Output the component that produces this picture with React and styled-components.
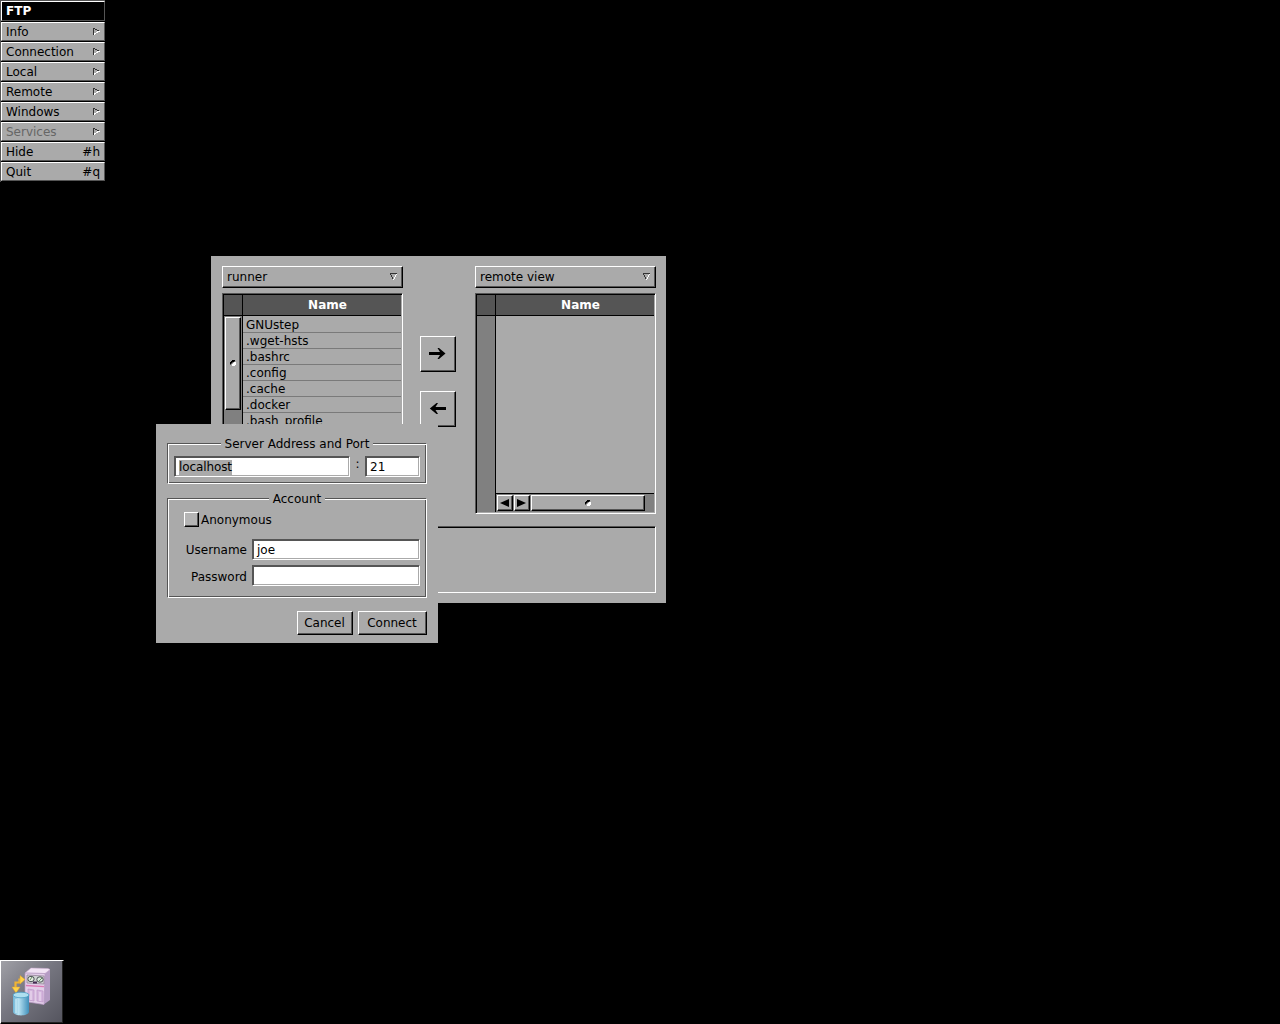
import React from 'react';
import styled, { createGlobalStyle, css } from 'styled-components';

const GRAY = '#aaaaaa';
const DARK = '#555555';
const TROUGH = '#808080';

const Global = createGlobalStyle`
  * { box-sizing: border-box; }
  body {
    margin: 0;
    background: #000;
    color: #000;
    font: 12px/14px "DejaVu Sans", sans-serif;
    overflow: hidden;
  }
  svg { display: block; flex: none; }
`;

const raised = css`
  background: ${GRAY};
  border: 1px solid #000;
  border-top-color: #fff;
  border-left-color: #fff;
  box-shadow: inset -1px -1px 0 ${DARK};
`;

const sunken = css`
  border: 1px solid #fff;
  border-top-color: ${DARK};
  border-left-color: ${DARK};
  box-shadow: inset 1px 1px 0 #000;
`;

const Desktop = styled.main`
  position: relative;
  width: 1280px;
  height: 1024px;
  background: #000;
  overflow: hidden;
`;

/* ---- application menu ---- */

const Menu = styled.nav`
  position: absolute;
  left: 0;
  top: 0;
  width: 105px;
  padding-left: 1px;
  border-top: 1px solid ${DARK};
  background: linear-gradient(${DARK}, ${DARK}) 0 0 / 1px 181px no-repeat;
`;

const MenuTitle = styled.div`
  height: 20px;
  margin-bottom: 1px;
  padding: 3px 4px;
  border: 1px solid ${DARK};
  border-top-color: #fff;
  border-left-color: #fff;
  background: #000;
  color: #fff;
  font-weight: bold;
  line-height: 13px;
`;

const MenuItem = styled.div`
  display: flex;
  justify-content: space-between;
  height: 19px;
  margin-bottom: 1px;
  padding: 2px 4px 0;
  border: 1px solid ${DARK};
  border-top-color: #fff;
  border-left-color: #fff;
  background: ${GRAY};
  color: ${(p) => (p.$disabled ? '#666' : '#000')};
`;

const SubmenuArrow = styled.svg`
  margin-top: 2px;
`;

/* ---- windows ---- */

const Window = styled.section`
  position: absolute;
  left: ${(p) => p.$x}px;
  top: ${(p) => p.$y}px;
  width: ${(p) => p.$w}px;
  height: ${(p) => p.$h}px;
  background: ${GRAY};
`;

const Browser = styled.div`
  display: flex;
  padding: 10px 10px 0 11px;
`;

const Pane = styled.div`
  width: 181px;
`;

const PopUp = styled.div`
  ${raised}
  display: flex;
  justify-content: space-between;
  height: 22px;
  padding: 3px 4px 0;
`;

const PopUpArrow = styled.svg`
  margin-top: 2px;
`;

const Table = styled.div`
  ${sunken}
  display: flex;
  height: 221px;
  margin-top: 5px;
  padding: 1px;
`;

const Side = styled.div`
  display: flex;
  flex-direction: column;
  width: 19px;
  border-right: 1px solid #000;
  background: ${TROUGH};
`;

const Corner = styled.div`
  height: 21px;
  background: ${DARK};
  border-bottom: 1px solid #000;
`;

const Knob = styled.div`
  ${raised}
  display: flex;
  align-items: center;
  justify-content: center;
  width: ${(p) => p.$w}px;
  height: ${(p) => p.$h}px;
  padding-bottom: ${(p) => (p.$h % 2)}px;
`;

const SideTrack = styled.div`
  padding: 1px 0 0 1px;
`;

const Column = styled.div`
  display: flex;
  flex-direction: column;
  flex: 1;
  min-width: 0;
`;

const Heading = styled.div`
  height: 21px;
  padding: 3px 0 0 11px;
  background: ${DARK};
  border-bottom: 1px solid #000;
  color: #fff;
  font-weight: bold;
  text-align: center;
`;

const Rows = styled.div`
  flex: 1;
  min-height: 0;
  padding-top: 1px;
  overflow: hidden;
`;

const Row = styled.div`
  height: 16px;
  padding: 1px 3px 0;
  background: linear-gradient(#7a7a7a, #7a7a7a) 0 100% / 100% 1px no-repeat;
`;

const HScroller = styled.div`
  display: flex;
  gap: 1px;
  height: 19px;
  padding: 1px 0 0 1px;
  border-top: 1px solid #000;
  background: ${TROUGH};
`;

const Transfer = styled.div`
  display: flex;
  flex-direction: column;
  gap: 19px;
  width: 72px;
  padding: 70px 0 0 17px;
`;

const ArrowButton = styled.div`
  ${raised}
  width: 36px;
  height: 36px;
  display: flex;
  align-items: center;
  justify-content: center;
  padding: 0 1px 1px 0;
`;

const Log = styled.div`
  ${sunken}
  height: 67px;
  margin: 12px 10px 0 11px;
`;

/* ---- connection panel ---- */

const Panel = styled(Window)`
  padding: 12px 11px 0;
`;

const Group = styled.fieldset`
  position: relative;
  min-width: 0;
  width: 260px;
  height: ${(p) => p.$h}px;
  margin: 7px 0 ${(p) => p.$gap}px;
  padding: ${(p) => p.$pad};
  border: 1px solid #fff;
  border-top-color: ${DARK};
  border-left-color: ${DARK};
  box-shadow: inset 1px 1px 0 #fff, inset -1px -1px 0 ${DARK};
`;

const GroupTitle = styled.div`
  position: absolute;
  left: 50%;
  top: -7px;
  transform: translateX(-50%);
  width: ${(p) => p.$w}px;
  background: ${GRAY};
  text-align: center;
  white-space: nowrap;
`;

const Line = styled.div`
  display: flex;
  align-items: flex-start;
  margin-bottom: ${(p) => p.$mb || 0}px;
`;

const Field = styled.div`
  width: ${(p) => p.$w}px;
  height: 21px;
  padding: 3px 4px;
  background: #fff;
  border: 1px solid #fff;
  border-top-color: ${DARK};
  border-left-color: ${DARK};
  box-shadow: inset 1px 1px 0 ${DARK}, inset -1px -1px 0 ${GRAY};
`;

const Selection = styled.span`
  display: inline-block;
  width: 53px;
  height: 15px;
  background: ${GRAY};
  letter-spacing: -0.1px;
`;

const Colon = styled.span`
  width: 15px;
  padding-top: 1px;
  text-align: center;
`;

const Label = styled.label`
  width: 79px;
  padding: ${(p) => p.$top}px 5px 0 0;
  text-align: right;
`;

const CheckBox = styled.span`
  ${raised}
  width: 15px;
  height: 15px;
  margin: 0 2px 0 11px;
  background: #b4b4b4;
`;

const CheckLabel = styled.span`
  padding-top: 1px;
`;

const Buttons = styled.div`
  display: flex;
  justify-content: flex-end;
  gap: 5px;
`;

const Button = styled.div`
  ${raised}
  width: ${(p) => p.$w}px;
  height: 24px;
  padding: 4px 1px 0 0;
  text-align: center;
`;

const AppIcon = styled.div`
  position: absolute;
  left: 0;
  bottom: 0;
  width: 64px;
  height: 64px;
  border: 1px solid #000;
  border-top-color: #fff;
  border-left-color: #fff;
  background: linear-gradient(135deg, #a0a0a6, #767680 45%, #54545e);
  box-shadow: inset -1px -1px 0 #222;
`;

const Dimple = () => (
  <svg width="6" height="6" shapeRendering="crispEdges">
    <path d="M4 1h1v1H4zM2 2h1v1H2zM0 4h1v1H0zM1 3h1v1H1z" fill="#555" />
    <path d="M2 0h3v1H2zM1 1h3v1H1zM0 2h2v1H0zM0 3h1v1H0z" fill="#000" />
    <path d="M4 2h2v2H4zM3 3h3v1H3zM2 4h4v1H2zM2 5h3v1H2z" fill="#fff" />
  </svg>
);

const items = [
  ['Info'], ['Connection'], ['Local'], ['Remote'], ['Windows'],
  ['Services', null, true], ['Hide', '#h'], ['Quit', '#q'],
];

const files = ['GNUstep', '.wget-hsts', '.bashrc', '.config', '.cache', '.docker', '.bash_profile'];

const Selector = ({ children }) => (
  <PopUp>
    {children}
    <PopUpArrow width="9" height="9" shapeRendering="crispEdges">
      <path d="M7 2h1v1H7zM6 3h1v2H6zM5 5h1v2H5zM4 7h1v1H4z" fill="#fff" />
      <path d="M1 1h7v1H1zM1 2h1v1H1zM2 3h1v2H2zM3 5h1v2H3z" fill="#333" />
    </PopUpArrow>
  </PopUp>
);

function FileWindow() {
  return (
    <Window $x={211} $y={256} $w={455} $h={347}>
      <Browser>
        <Pane>
          <Selector>runner</Selector>
          <Table>
            <Side>
              <Corner />
              <SideTrack><Knob $w={16} $h={93}><Dimple /></Knob></SideTrack>
            </Side>
            <Column>
              <Heading>Name</Heading>
              <Rows>{files.map((f) => <Row key={f}>{f}</Row>)}</Rows>
            </Column>
          </Table>
        </Pane>
        <Transfer>
          <ArrowButton>
            <svg width="17" height="11">
              <path d="M0 4h11L8.500 0h1.500l6.500 5.500L10 11H8.500L11 7H0z" />
            </svg>
          </ArrowButton>
          <ArrowButton>
            <svg width="17" height="11">
              <path d="M17 4H6.500L9 0H7.500L.8 5.500 7.500 11H9L6.500 7H17z" />
            </svg>
          </ArrowButton>
        </Transfer>
        <Pane>
          <Selector>remote view</Selector>
          <Table>
            <Side><Corner /></Side>
            <Column>
              <Heading>Name</Heading>
              <Rows />
              <HScroller>
                <Knob $w={16} $h={16}><svg width="10" height="8"><path d="M9 0v8L0 4z" /></svg></Knob>
                <Knob $w={16} $h={16}><svg width="10" height="8"><path d="M0 0v8l9-4z" /></svg></Knob>
                <Knob $w={114} $h={16}><Dimple /></Knob>
              </HScroller>
            </Column>
          </Table>
        </Pane>
      </Browser>
      <Log />
    </Window>
  );
}

function ConnectPanel() {
  return (
    <Panel $x={156} $y={424} $w={282} $h={219}>
      <Group $h={41} $gap={14} $pad="12px 6px 0">
        <GroupTitle $w={152}>Server Address and Port</GroupTitle>
        <Line>
          <Field $w={176}><Selection>localhost</Selection></Field>
          <Colon>:</Colon>
          <Field $w={55}>21</Field>
        </Line>
      </Group>
      <Group $h={100} $gap={13} $pad="13px 6px 0 5px">
        <GroupTitle $w={56}>Account</GroupTitle>
        <Line $mb={12}>
          <CheckBox />
          <CheckLabel>Anonymous</CheckLabel>
        </Line>
        <Line $mb={5}><Label $top={4}>Username</Label><Field $w={168}>joe</Field></Line>
        <Line><Label $top={5}>Password</Label><Field $w={168} /></Line>
      </Group>
      <Buttons>
        <Button $w={56}>Cancel</Button>
        <Button $w={69}>Connect</Button>
      </Buttons>
    </Panel>
  );
}

const FtpIcon = () => (
  <svg width="62" height="62" viewBox="0 0 62 62">
    <defs>
      <linearGradient id="can" x1="0" x2="1">
        <stop offset="0" stopColor="#6fb4d6" />
        <stop offset=".35" stopColor="#b9e2f2" />
        <stop offset="1" stopColor="#3f8fba" />
      </linearGradient>
    </defs>
    <path d="M44 12l5-4v31l-7 5z" fill="#b59cc4" />
    <path d="M24 12l6-5 17 .5 2 1-5 4z" fill="#f1e3f4" stroke="#c9a9cf" strokeWidth=".5" />
    <path d="M24 12l20 .5-1 31-19-3z" fill="#e3cfe9" stroke="#b698c2" strokeWidth=".7" />
    <path d="M26 14l17 1v8l-17-1z" fill="#cfd3d2" stroke="#8b7891" strokeWidth=".7" />
    <ellipse cx="30" cy="18" rx="3.2" ry="2.7" fill="#e4ece0" stroke="#4d5257" />
    <ellipse cx="39" cy="18.5" rx="3.2" ry="2.7" fill="#d9eadd" stroke="#4d5257" />
    <path d="M29 19l2-3M38 20l3-3" stroke="#648d60" />
    <path d="M32 21.5h4" stroke="#432b51" strokeWidth="2" />
    <path d="M25 24.5l18 1.2" stroke="#dc78b4" strokeWidth="1.3" />
    <path d="M27 28l6 1v11l-6-1zM36 29l6 1v11l-6-1z" fill="#d5b7dd" stroke="#bd97c9" strokeWidth=".7" />
    <path d="M30 30v9M39 31v9" stroke="#efe1f3" />
    <path d="M14.500 28V21.500h4V18.500h3" fill="none" stroke="#f0b433" strokeWidth="2.200" />
    <path d="M11 26l4 6 4-6zM19 14.500l5 4-5 4.500z" fill="#ffd34a" stroke="#dfa02c" strokeWidth=".5" />
    <path d="M12 34v17c1 4.500 15 4.500 16 0V34z" fill="url(#can)" />
    <path d="M15 38v14" stroke="#d4f0f8" strokeWidth="1" />
    <ellipse cx="20" cy="34" rx="8" ry="2.800" fill="#aedff0" stroke="#4a9cc4" strokeWidth=".8" />
  </svg>
);

export default function App() {
  return (
    <>
      <Global />
      <Desktop>
        <Menu>
          <MenuTitle>FTP</MenuTitle>
          {items.map(([name, shortcut, disabled]) => (
            <MenuItem key={name} $disabled={disabled}>
              <span>{name}</span>
              {shortcut ? <span>{shortcut}</span> : (
                <SubmenuArrow width="8" height="9" shapeRendering="crispEdges">
                  <path d="M5 4h3v1H5zM4 5h2v1H4zM2 6h2v1H2zM2 7h1v1H2z" fill="#fff" />
                  <path d="M1 1h1v7H1zM2 1h1v1H2zM3 2h2v1H3zM5 3h2v1H5z" fill="#333" />
                </SubmenuArrow>
              )}
            </MenuItem>
          ))}
        </Menu>
        <FileWindow />
        <ConnectPanel />
        <AppIcon><FtpIcon /></AppIcon>
      </Desktop>
    </>
  );
}
